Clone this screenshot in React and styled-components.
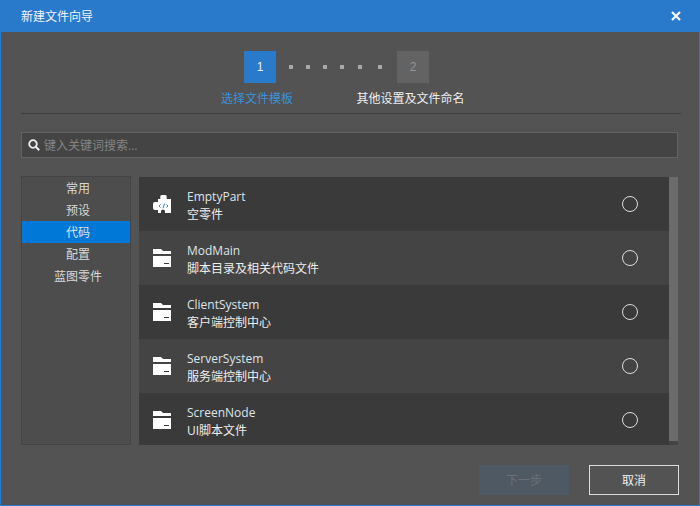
import React from 'react';
import styled, { createGlobalStyle } from 'styled-components';

const GlobalStyle = createGlobalStyle`
html, body {
  margin: 0;
  padding: 0;
  background: #535353;
}
* {
  box-sizing: border-box;
}
`

const FONT = `"Open Sans", "Noto Sans CJK SC", sans-serif`

const Win = styled.div`
width: 700px;
height: 506px;
display: flex;
flex-direction: column;
background: #535353;
border: 1px solid #2a7acb;
border-top: 0;
font-family: ${FONT};
font-size: 12px;
color: #eee;
overflow: hidden;
`

const TitleBar = styled.div`
height: 32px;
margin: 0 -1px;
padding: 0 19px 0 21px;
flex: none;
display: flex;
align-items: center;
justify-content: space-between;
background: #2a7acb;
color: #f0f4fa;
`

const CloseBtn = styled.svg`
width: 10px;
height: 10px;
margin-top: -1px;
`

const Stepper = styled.div`
margin: 19px 0 0 243px;
display: flex;
align-items: center;
`

const StepBox = styled.div`
width: 32px;
height: 32px;
margin-left: ${p => p.$gap || 0}px;
display: flex;
align-items: center;
justify-content: center;
background: ${p => p.$active ? '#2a7acb' : '#636363'};
color: ${p => p.$active ? '#e8eef8' : '#959595'};
font-family: "Liberation Sans", sans-serif;
`

const Dot = styled.span`
width: 4px;
height: 4px;
margin-left: ${p => p.$gap}px;
background: #a8a8a8;
`

const StepLabels = styled.div`
height: 18px;
margin: 7px 0 0 220px;
display: flex;
line-height: 18px;
`

const StepLabel = styled.div`
width: ${p => p.$width}px;
color: ${p => p.$active ? '#3a92dc' : '#eee'};
white-space: nowrap;
`

const Divider = styled.div`
height: 1px;
margin: 5px 18px 0 20px;
background: #3f3f3f;
`

const SearchBar = styled.div`
height: 26px;
margin: 18px 21px 0 20px;
padding: 0 6px;
display: flex;
align-items: center;
gap: 4px;
background: #444;
border: 1px solid #636363;
color: #858585;
`

const Main = styled.div`
height: 270px;
margin: 18px 21px 0 20px;
display: flex;
gap: 8px;
`

const Sidebar = styled.div`
width: 110px;
height: 269px;
flex: none;
background: #4d4d4d;
border: 1px solid #444;
`

const SideItem = styled.div`
height: 22px;
padding-left: 4px;
text-align: center;
line-height: 24px;
background: ${p => p.$active ? '#0078d7' : 'transparent'};
color: ${p => p.$active ? '#e4e4e4' : '#d8d8d8'};
`

const ListWrap = styled.div`
flex: 1;
height: 268px;
margin-top: 1px;
display: flex;
`

const List = styled.div`
flex: 1;
`

const Row = styled.div`
height: ${p => p.$last ? 52 : 54}px;
padding: 0 31px 0 13px;
display: flex;
align-items: ${p => p.$last ? 'flex-start' : 'center'};
background: ${p => p.$even ? '#444' : '#3a3a3a'};
`

const RowIcon = styled.svg`
width: 20px;
height: 20px;
margin-right: 15px;
flex: none;
${p => p.$last && 'margin-top: 17px;'}
`

const RowText = styled.div`
flex: 1;
line-height: 18px;
padding-top: ${p => p.$last ? 11 : 4}px;
`

const RowName = styled.div`
color: #dce4ea;
`

const RowDesc = styled.div`
color: #eee;
`

const Radio = styled.span`
width: 16px;
height: 16px;
flex: none;
border: 1.5px solid #ddd;
border-radius: 50%;
${p => p.$last && 'margin-top: 19px;'}
`

const Scroll = styled.div`
width: 9px;
background: #444;
`

const ScrollThumb = styled.div`
height: 264px;
background: #6b6b6b;
`

const Footer = styled.div`
margin: 19px 20px 0 0;
display: flex;
justify-content: flex-end;
gap: 20px;
`

const Button = styled.div`
width: 90px;
height: 30px;
display: flex;
align-items: center;
justify-content: center;
background: ${p => p.$disabled ? '#4f5964' : 'transparent'};
border: ${p => p.$disabled ? '0' : '1px solid #ddd'};
color: ${p => p.$disabled ? '#6a6f75' : '#eee'};
`

let tabs = ['常用', '预设', '代码', '配置', '蓝图零件']

let rows = [
  { name: 'EmptyPart', desc: '空零件', puzzle: true },
  { name: 'ModMain', desc: '脚本目录及相关代码文件' },
  { name: 'ClientSystem', desc: '客户端控制中心' },
  { name: 'ServerSystem', desc: '服务端控制中心' },
  { name: 'ScreenNode', desc: 'UI脚本文件' },
]

const Puzzle = (props) => (
  <RowIcon viewBox="0 0 20 20" {...props}>
    <path fill="#fff" d="M6 5h2.300V3a1.700 1.700 0 0 1 1.700-2h3a1.700 1.700 0 0 1 1.700 2v2H19v14h-6v-1.500a2 2 0 0 0-4 0V19H6v-3H3a2 2 0 0 1-2-2v-4a2 2 0 0 1 2-2h3z" />
    <path fill="none" stroke="#2a82d8" strokeWidth="1" d="M8.500 10.500 7 12l1.500 1.500M14.500 10.500 16 12l-1.500 1.500M12.500 9.800l-1.500 4.400" />
  </RowIcon>
)

const Folder = (props) => (
  <RowIcon viewBox="0 0 20 20" {...props}>
    <path fill="#fff" d="M1 1h8l2 2h8v3H1zM1 8h18v11H1z" />
    <path fill="#3a3a3a" d="M12 15h5v1h-5z" />
  </RowIcon>
)

export default function App() {
  return (
    <Win>
      <GlobalStyle />
      <TitleBar>
        <span>新建文件向导</span>
        <CloseBtn viewBox="0 0 10 10">
          <path stroke="#f4f6fa" strokeWidth="2.200" d="M1 1l8 8M9 1l-8 8" />
        </CloseBtn>
      </TitleBar>

      <Stepper>
        <StepBox $active>1</StepBox>
        <Dot $gap={13} />
        <Dot $gap={13} />
        <Dot $gap={13} />
        <Dot $gap={13} />
        <Dot $gap={14} />
        <Dot $gap={16} />
        <StepBox $gap={15}>2</StepBox>
      </Stepper>
      <StepLabels>
        <StepLabel $active $width={135.5}>选择文件模板</StepLabel>
        <StepLabel $width={108}>其他设置及文件命名</StepLabel>
      </StepLabels>
      <Divider />

      <SearchBar>
        <svg width="12" height="12" viewBox="0 0 12 12">
          <circle cx="5" cy="5" r="3.800" fill="none" stroke="#eee" strokeWidth="1.800" />
          <path stroke="#eee" strokeWidth="2" d="M7.800 7.800l3.400 3.400" />
        </svg>
        <span>键入关键词搜索...</span>
      </SearchBar>

      <Main>
        <Sidebar>
          {tabs.map((t) => (
            <SideItem key={t} $active={t === '代码'}>{t}</SideItem>
          ))}
        </Sidebar>
        <ListWrap>
          <List>
            {rows.map((r, i) => {
              let last = i === rows.length - 1
              let Icon = r.puzzle ? Puzzle : Folder
              return (
                <Row key={r.name} $even={i % 2 === 1} $last={last}>
                  <Icon $last={last} />
                  <RowText $last={last}>
                    <RowName>{r.name}</RowName>
                    <RowDesc>{r.desc}</RowDesc>
                  </RowText>
                  <Radio $last={last} />
                </Row>
              )
            })}
          </List>
          <Scroll>
            <ScrollThumb />
          </Scroll>
        </ListWrap>
      </Main>

      <Footer>
        <Button $disabled>下一步</Button>
        <Button>取消</Button>
      </Footer>
    </Win>
  );
}
